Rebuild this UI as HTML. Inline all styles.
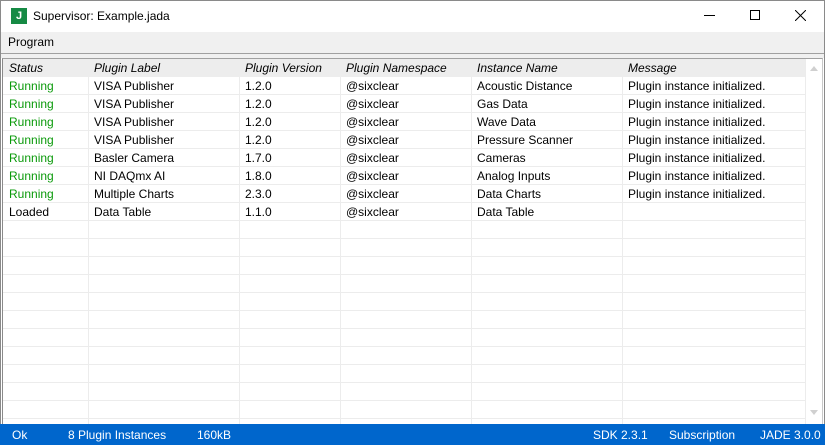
<!DOCTYPE html>
<html><head><style>
*{margin:0;padding:0;box-sizing:border-box}
body{width:825px;height:445px;overflow:hidden;background:#fff;font-family:"Segoe UI","Liberation Sans","DejaVu Sans",sans-serif;font-size:12px;color:#000;position:relative}
.abs{position:absolute}
.t{position:absolute;white-space:nowrap;line-height:18px}
.g{color:#0a9a0a}
.h{font-style:italic}
</style></head><body>
<div class="abs" style="left:0;top:0;width:825px;height:445px;border:1px solid #8a8a8a;border-bottom:none"></div>
<div class="abs" style="left:11px;top:8px;width:16px;height:16px;background:#168a44;color:#fff;font-weight:bold;font-size:11px;line-height:16px;text-align:center">J</div>
<div class="t" style="left:33px;top:7px">Supervisor: Example.jada</div>
<div class="abs" style="left:704px;top:15px;width:11px;height:1px;background:#000"></div>
<div class="abs" style="left:750px;top:10px;width:10px;height:10px;border:1px solid #000"></div>
<svg class="abs" style="left:795px;top:10px" width="11" height="11"><path d="M0 0L11 11M11 0L0 11" stroke="#000" stroke-width="1"/></svg>
<div class="abs" style="left:1px;top:32px;width:823px;height:21px;background:#f0f0f0"></div>
<div class="t" style="left:8px;top:33px">Program</div>
<div class="abs" style="left:1px;top:53px;width:823px;height:1px;background:#a0a0a0"></div>
<div class="abs" style="left:1px;top:54px;width:823px;height:4px;background:#f0f0f0"></div>
<div class="abs" style="left:2px;top:58px;width:821px;height:366px;border-left:1px solid #8a8a8a;border-top:1px solid #a0a0a0;border-right:1px solid #c8c8c8"></div>
<div class="abs" style="left:3px;top:59px;width:802px;height:18px;background:#ededed"></div>
<div id="grid"></div>
<div class="abs" style="left:805px;top:59px;width:1px;height:365px;background:#ececec"></div>
<div class="abs" style="left:810px;top:66px;width:0;height:0;border-left:4px solid transparent;border-right:4px solid transparent;border-bottom:5px solid #d0d0d0"></div>
<div class="abs" style="left:810px;top:410px;width:0;height:0;border-left:4px solid transparent;border-right:4px solid transparent;border-top:5px solid #d0d0d0"></div>
<div class="abs" style="left:0;top:424px;width:825px;height:21px;background:#0066cc;color:#fff">
<div class="t" style="left:12px;top:2px">Ok</div>
<div class="t" style="left:68px;top:2px">8 Plugin Instances</div>
<div class="t" style="left:197px;top:2px">160kB</div>
<div class="t" style="left:593px;top:2px">SDK 2.3.1</div>
<div class="t" style="left:669px;top:2px">Subscription</div>
<div class="t" style="left:760px;top:2px">JADE 3.0.0</div>
</div>
<script>
var g=document.getElementById('grid'),h='';
var cols=[3,88,239,340,471,622,805];
for(var i=1;i<6;i++)h+='<div class="abs" style="left:'+cols[i]+'px;top:77px;width:1px;height:347px;background:#ececec"></div>';
for(var y=94;y<424;y+=18)h+='<div class="abs" style="left:3px;top:'+y+'px;width:802px;height:1px;background:#ececec"></div>';
var xs=[9,94,245,346,477,628];
var hd=['Status','Plugin Label','Plugin Version','Plugin Namespace','Instance Name','Message'];
for(var i=0;i<6;i++)h+='<div class="t h" style="left:'+xs[i]+'px;top:59px">'+hd[i]+'</div>';
var rows=[
['Running','VISA Publisher','1.2.0','@sixclear','Acoustic Distance','Plugin instance initialized.'],
['Running','VISA Publisher','1.2.0','@sixclear','Gas Data','Plugin instance initialized.'],
['Running','VISA Publisher','1.2.0','@sixclear','Wave Data','Plugin instance initialized.'],
['Running','VISA Publisher','1.2.0','@sixclear','Pressure Scanner','Plugin instance initialized.'],
['Running','Basler Camera','1.7.0','@sixclear','Cameras','Plugin instance initialized.'],
['Running','NI DAQmx AI','1.8.0','@sixclear','Analog Inputs','Plugin instance initialized.'],
['Running','Multiple Charts','2.3.0','@sixclear','Data Charts','Plugin instance initialized.'],
['Loaded','Data Table','1.1.0','@sixclear','Data Table','']];
rows.forEach(function(r,k){for(var i=0;i<6;i++)h+='<div class="t'+(i==0&&r[0]=='Running'?' g':'')+'" style="left:'+xs[i]+'px;top:'+(77+18*k)+'px">'+r[i]+'</div>';});
g.innerHTML=h;
</script>
</body></html>
